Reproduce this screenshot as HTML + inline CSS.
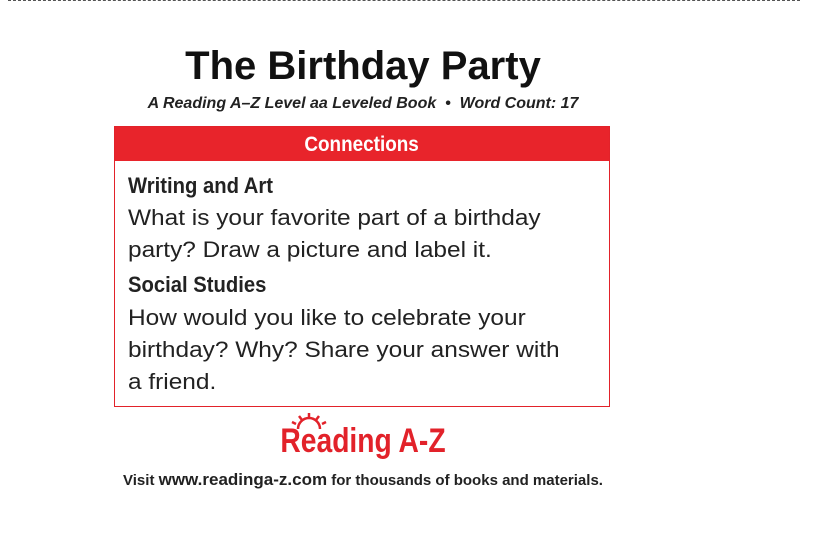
<!DOCTYPE html>
<html><head><style>
body{margin:0;width:824px;height:533px;background:#fff;position:relative;overflow:hidden;font-family:"Liberation Sans",sans-serif;}
.dash{position:absolute;top:0;left:8px;width:792px;border-top:1px dashed #555;}
.t{position:absolute;left:0;width:726px;text-align:center;white-space:nowrap;}
h1{position:absolute;top:44px;left:0;width:726px;text-align:center;margin:0;font-size:40px;font-weight:bold;color:#111;}
.sub{top:95px;font-size:16px;font-weight:bold;font-style:italic;color:#222;}
.box{position:absolute;left:114px;top:126px;width:494px;height:279px;border:1px solid #e2222a;}
.hd{height:34px;background:#e8242b;color:#fff;text-align:center;font-size:21px;font-weight:bold;line-height:36px;}
.hd span{display:inline-block;transform:scaleX(.9);}
.l{position:absolute;left:13px;font-size:22px;color:#222;white-space:nowrap;transform:scaleX(1.11);transform-origin:left;}
.b{font-weight:bold;transform:scaleX(.92);}
.logo{top:422px;left:0;width:726px;font-size:34px;font-weight:bold;color:#e2222a;transform:scaleX(.83);}
.ft{top:470px;font-size:15px;font-weight:bold;color:#222;}
</style></head><body>
<div class="dash"></div>
<h1>The Birthday Party</h1>
<div class="t sub">A Reading A–Z Level aa Leveled Book &nbsp;•&nbsp; Word Count: 17</div>
<div class="box">
<div class="hd"><span>Connections</span></div>
<div class="l b" style="top:46px">Writing and Art</div>
<div class="l" style="top:78px">What is your favorite part of a birthday</div>
<div class="l" style="top:110px">party? Draw a picture and label it.</div>
<div class="l b" style="top:145px">Social Studies</div>
<div class="l" style="top:178px">How would you like to celebrate your</div>
<div class="l" style="top:210px">birthday? Why? Share your answer with</div>
<div class="l" style="top:242px">a friend.</div>
</div>
<svg style="position:absolute;left:290px;top:412px" width="40" height="18"><g stroke="#e2222a" stroke-width="2.5" fill="none"><path d="M8 17 A11 11 0 0 1 30 17"/><path d="M19 1v5M9 4l3 4M29 4l-3 4M2 10l4 2M36 10l-4 2"/></g></svg>
<div class="t logo">Reading A-Z</div>
<div class="t ft">Visit <span style="font-size:17px">www.readinga-z.com</span> for thousands of books and materials.</div>
</body></html>
